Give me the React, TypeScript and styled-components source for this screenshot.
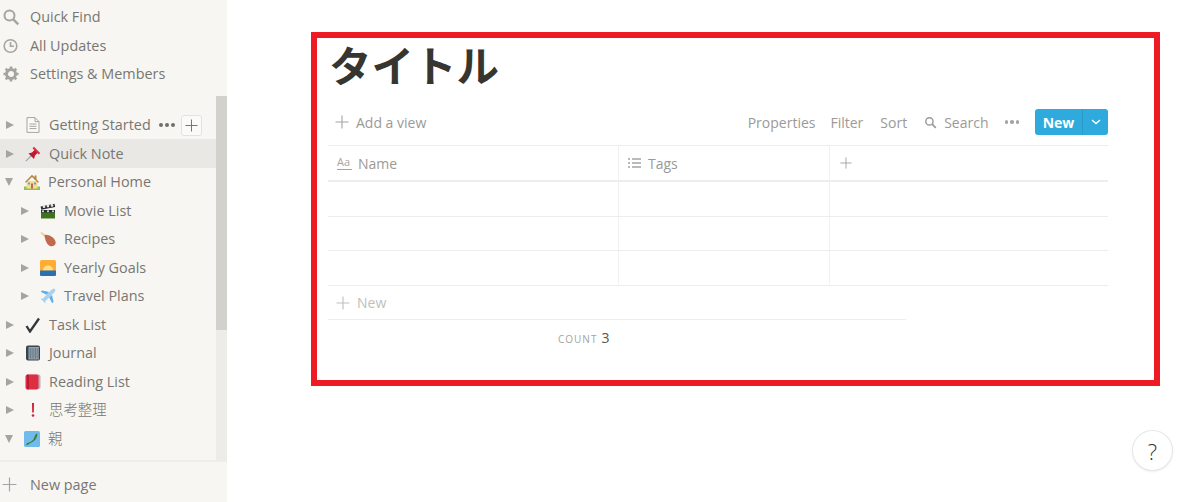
import React from "react";
import styled, { createGlobalStyle } from "styled-components";

const GlobalStyle = createGlobalStyle`
  html, body {
    margin: 0;
    padding: 0;
    height: 502px;
    overflow: hidden;
    background: #fff;
    font-family: "Open Sans", "Noto Sans CJK JP", sans-serif;
  }
  * { box-sizing: border-box; }
`;

const Page = styled.div`
  position: relative;
  display: flex;
  width: 1200px;
  height: 502px;
`;

const Sidebar = styled.aside`
  display: flex;
  flex-direction: column;
  width: 227px;
  height: 502px;
  background: #f7f6f3;
  color: #787672;
  font-size: 14.4px;
`;

const TopNav = styled.nav`
  height: 96px;
  padding-top: 2.5px;
`;

const NavRow = styled.div`
  display: flex;
  align-items: center;
  gap: 10px;
  height: 28.5px;
  padding-left: 2px;
`;

const NavIcon = styled.svg`
  flex: none;
  width: 18px;
  height: 18px;
  margin-top: 1px;
`;

const ScrollArea = styled.div`
  display: flex;
  flex: 1;
  min-height: 0;
`;

const PageList = styled.div`
  flex: 1;
  padding-top: 14.75px;
`;

const Scrollbar = styled.div`
  width: 11px;
  background: #edece9;
`;

const ScrollThumb = styled.div`
  height: 234px;
  background: #d3d1cb;
`;

const PageRow = styled.div<{ $depth?: number; $active?: boolean }>`
  display: flex;
  align-items: center;
  height: 28.5px;
  padding-left: ${(p) => 5 + (p.$depth ?? 0) * 15}px;
  background: ${(p) => (p.$active ? "#e9e8e5" : "transparent")};
`;

const Caret = styled.span<{ $open?: boolean }>`
  flex: none;
  width: 0;
  height: 0;
  ${(p) =>
    p.$open
      ? `margin-right: 11px;
         border-left: 4.5px solid transparent;
         border-right: 4.5px solid transparent;
         border-top: 8px solid #a5a4a0;`
      : `margin-left: 1px;
         margin-right: 11px;
         border-top: 4.5px solid transparent;
         border-bottom: 4.5px solid transparent;
         border-left: 8px solid #a5a4a0;`}
`;

const PageIcon = styled.svg`
  flex: none;
  width: 16px;
  height: 16px;
  margin-right: 8px;
`;

const PageLabel = styled.span<{ $cjk?: boolean }>`
  padding-bottom: ${(p) => (p.$cjk ? 3 : 0.5)}px;
  white-space: nowrap;
  font-family: ${(p) =>
    p.$cjk ? '"Noto Sans CJK JP", sans-serif' : '"Open Sans", sans-serif'};
  font-weight: ${(p) => (p.$cjk ? 300 : 400)};
`;

const RowDots = styled.span<{ $offset?: number }>`
  display: flex;
  gap: 2px;
  margin-left: ${(p) => p.$offset ?? 8}px;
`;

const Dot = styled.i<{ $color?: string; $size?: number }>`
  display: block;
  width: ${(p) => p.$size ?? 4}px;
  height: ${(p) => p.$size ?? 4}px;
  border-radius: 50%;
  background: ${(p) => p.$color ?? "#6f6e69"};
`;

const RowAdd = styled.span`
  display: flex;
  align-items: center;
  justify-content: center;
  width: 21px;
  height: 21px;
  margin-left: 6px;
  border: 1px solid #e3e2df;
  border-radius: 3px;
  background: #fbfaf8;
`;

const SidebarFooter = styled.div`
  display: flex;
  align-items: center;
  gap: 13px;
  height: 42px;
  padding: 5px 0 0 2px;
  border-top: 2px solid #eeede9;
`;

const Main = styled.main`
  flex: 1;
  padding: 32px 0 0 84px;
`;

const Frame = styled.section`
  width: 849px;
  height: 354px;
  padding: 0 46px 0 11px;
  border: 6px solid #ed1c24;
`;

const Title = styled.h1`
  height: 71px;
  margin: 0;
  padding-left: 1px;
  color: #37352f;
  font-family: "Noto Sans CJK JP", sans-serif;
  font-size: 42.5px;
  font-weight: 700;
  line-height: 52px;
`;

const Toolbar = styled.div`
  display: flex;
  align-items: center;
  height: 36px;
  padding: 0 0 10px 7px;
  color: #9b9a97;
  font-size: 14px;
`;

const AddView = styled.span`
  display: flex;
  align-items: center;
  gap: 7px;
  margin-right: auto;
`;

const ToolItem = styled.span<{ $gap?: number }>`
  display: flex;
  align-items: center;
  gap: 7px;
  margin-right: ${(p) => p.$gap ?? 17}px;
  white-space: nowrap;
`;

const NewButton = styled.div`
  display: flex;
  width: 73px;
  height: 26px;
  border-radius: 3px;
  background: #2eaadc;
  color: #fff;
  font-size: 14px;
  font-weight: 700;
`;

const NewLabel = styled.span`
  display: flex;
  flex: 1;
  align-items: center;
  justify-content: center;
  border-right: 1px solid #2a9ac7;
`;

const NewArrow = styled.span`
  display: flex;
  width: 25px;
  align-items: center;
  justify-content: center;
`;

const Table = styled.div`
  border-top: 1px solid #ededec;
`;

const TableRow = styled.div<{ $height: number; $thick?: boolean }>`
  display: grid;
  grid-template-columns: 291px 211px 1fr;
  height: ${(p) => p.$height}px;
  border-bottom: ${(p) => (p.$thick ? 2 : 1)}px solid #ededec;
`;

const Cell = styled.div<{ $gap?: number; $inset?: number }>`
  display: flex;
  align-items: center;
  gap: ${(p) => p.$gap ?? 6}px;
  padding-left: ${(p) => p.$inset ?? 9}px;
  border-right: 1px solid #f1f1f0;
  color: #9b9a97;
  font-size: 14px;

  &:last-child {
    border-right: 0;
  }
`;

const TextTypeIcon = styled.span`
  display: block;
  width: 15px;
  height: 14px;
  border-bottom: 1px solid #a5a4a0;
  color: #a5a4a0;
  font-size: 11px;
  line-height: 12px;
`;

const NewRow = styled.div`
  display: flex;
  align-items: center;
  gap: 7px;
  width: 578px;
  height: 34px;
  padding-left: 8px;
  border-bottom: 1px solid #ededec;
  color: #c0bfbc;
  font-size: 14px;
`;

const CountRow = styled.div`
  display: flex;
  align-items: baseline;
  gap: 4px;
  width: 578px;
  padding: 8px 0 0 230px;
  color: #a5a4a0;
  font-size: 10px;
  letter-spacing: 1px;
`;

const CountValue = styled.span`
  color: #55534e;
  font-size: 14px;
  letter-spacing: 0;
`;

const HelpButton = styled.div`
  position: absolute;
  left: 1133px;
  top: 431px;
  display: flex;
  align-items: center;
  justify-content: center;
  width: 39px;
  height: 39px;
  border-radius: 50%;
  background: #fff;
  box-shadow: 0 0 0 1px #e6e6e5, 0 1px 3px rgba(15, 15, 15, 0.14);
  color: #37352f;
  font-size: 22px;
  font-weight: 300;
`;

function PlusIcon({ size, color }: { size: number; color: string }) {
  return (
    <svg width={size} height={size} viewBox="0 0 14 14" style={{ flex: "none" }}>
      <path d="M7 .5v13M.5 7h13" stroke={color} strokeWidth="1.1" fill="none" />
    </svg>
  );
}

function SearchGlyph({ color, size }: { color: string; size: number }) {
  return (
    <svg width={size} height={size} viewBox="0 0 18 18" style={{ flex: "none" }}>
      <circle cx="7.5" cy="7.5" r="5" fill="none" stroke={color} strokeWidth="2" />
      <path d="M11.3 11.3l5 5" stroke={color} strokeWidth="2.4" />
    </svg>
  );
}

const pageIcons: Record<string, React.ReactNode> = {
  doc: (
    <>
      <path d="M2 .6h8l4 4v10.800H2z" fill="#fbfaf8" stroke="#a5a4a0" />
      <path d="M10 .6v4h4M4.500 7h7M4.500 9.300h7M4.500 11.600h7" fill="none" stroke="#a5a4a0" />
    </>
  ),
  pin: (
    <>
      <path d="M.8 15.200L6 10" stroke="#99aab5" strokeWidth="1.200" />
      <path d="M3.500 7.500l3.500-1 3-3 3 3-3 3-1 3.500z" fill="#be1931" />
      <path d="M9 .8l6.200 6.200-1.500 1.500L7.500 2.300z" fill="#dd2e44" />
    </>
  ),
  home: (
    <>
      <path d="M0 12.500h16V16H0z" fill="#8fc05c" />
      <path d="M2.500 7h11v7.500h-11z" fill="#f6dd8f" />
      <path d="M8 .8L1 8l1 .8L8 3l6 5.800 1-.8z" fill="#b4853d" />
      <path d="M10.500 1.500h2v4h-2z" fill="#b4853d" />
      <path d="M4 8.500h2v2H4zM10 8.500h2v2h-2z" fill="#5aa0d8" />
      <path d="M7 9.500h2v5H7z" fill="#c1694f" />
    </>
  ),
  movie: (
    <>
      <path d="M1 9h14v6.500H1z" fill="#3e721d" />
      <path d="M1 7h14v2.500H1z" fill="#292f33" />
      <path d="M.6 3.500L14.500.8l.7 3.200L1.300 6.800z" fill="#292f33" />
      <circle cx="4" cy="3.800" r="1.300" fill="#e8e8e8" />
      <circle cx="8" cy="3.100" r="1.300" fill="#e8e8e8" />
      <circle cx="12" cy="2.400" r="1.300" fill="#e8e8e8" />
      <circle cx="3" cy="8.300" r="1" fill="#e8e8e8" />
      <circle cx="8" cy="8.300" r="1" fill="#e8e8e8" />
      <circle cx="13" cy="8.300" r="1" fill="#e8e8e8" />
    </>
  ),
  chicken: (
    <>
      <path d="M1 1.500l5 4.500" stroke="#f4cf9c" strokeWidth="2" />
      <path d="M4.500 4c3.500-1 9.500 2 11 6.500 1 3.500-2.500 5.500-5.500 4.500-3-1-5-6-5.500-11z" fill="#c1694f" />
    </>
  ),
  sunrise: (
    <>
      <rect width="16" height="16" rx="1.500" fill="#ffac33" />
      <path d="M3 10.500a5 5 0 0 1 10 0z" fill="#ffe08a" />
      <path d="M0 10.500h16V14.500a1.500 1.500 0 0 1-1.500 1.500h-13A1.500 1.500 0 0 1 0 14.500z" fill="#2a6fb0" />
    </>
  ),
  plane: (
    <>
      <path d="M15 1c-1-.8-2.800 0-3.800 1L3 10.500l-2.500.3L3 13l2.300 2.500.2-2.500L14 4.800c1-1 1.800-2.800 1-3.800z" fill="#a6d3f0" />
      <path d="M9 4L2 2.500.8 3.800l5.700 3zM12 7l1.500 7-1.300 1.300-3-5.800z" fill="#5dadec" />
    </>
  ),
  check: <path d="M1.500 9l3.500 5.500L14 1.500" fill="none" stroke="#31373d" strokeWidth="2.300" />,
  journal: (
    <>
      <rect x="1" y=".5" width="14" height="15" rx="2" fill="#39434c" />
      <rect x="3.500" y="2" width="10.500" height="12.500" fill="#97a6b3" />
      <path d="M4 4h10M4 6h10M4 8h10M4 10h10M4 12h10M5.500 3v11M8 3v11M10.500 3v11M13 3v11" stroke="#67757f" strokeWidth=".7" />
    </>
  ),
  book: (
    <>
      <rect x="3" y=".5" width="12.500" height="14.500" rx="2" fill="#c3aeb2" />
      <rect x=".5" y=".5" width="13" height="15" rx="2" fill="#dd2e44" />
      <path d="M2.500.5h1v15h-1z" fill="#a0041e" />
    </>
  ),
  bang: (
    <>
      <path d="M7 1h2l-.2 9.500H7.200z" fill="#cf1f36" />
      <circle cx="8" cy="13.500" r="1.300" fill="#cf1f36" />
    </>
  ),
  japan: (
    <>
      <rect width="16" height="16" rx="1.500" fill="#6fbcec" />
      <path d="M2 13.500c1-1.500 2.500-1.500 4-2.500 1.500-.5 3-1.500 4-3.500.5-1.500 1-3.500 2.500-5l1 .5c-.5 2-1 4-2 5.500-2 2.500-5 3-6.500 4.500-1 1-2 1.500-3 .5z" fill="#3f7a30" />
    </>
  ),
};

type PageItem = {
  icon: string;
  label: string;
  depth?: number;
  open?: boolean;
  active?: boolean;
  cjk?: boolean;
};

const pages: PageItem[] = [
  { icon: "doc", label: "Getting Started" },
  { icon: "pin", label: "Quick Note", active: true },
  { icon: "home", label: "Personal Home", open: true },
  { icon: "movie", label: "Movie List", depth: 1 },
  { icon: "chicken", label: "Recipes", depth: 1 },
  { icon: "sunrise", label: "Yearly Goals", depth: 1 },
  { icon: "plane", label: "Travel Plans", depth: 1 },
  { icon: "check", label: "Task List" },
  { icon: "journal", label: "Journal" },
  { icon: "book", label: "Reading List" },
  { icon: "bang", label: "思考整理", cjk: true },
  { icon: "japan", label: "親", open: true, cjk: true },
];

export default function App() {
  return (
    <Page>
      <GlobalStyle />
      <Sidebar>
        <TopNav>
          <NavRow>
            <NavIcon viewBox="0 0 18 18">
              <circle cx="7.500" cy="7.500" r="5" fill="none" stroke="#a5a4a0" strokeWidth="2" />
              <path d="M11.300 11.300l5 5" stroke="#a5a4a0" strokeWidth="2.400" />
            </NavIcon>
            Quick Find
          </NavRow>
          <NavRow>
            <NavIcon viewBox="0 0 18 18">
              <circle cx="8.500" cy="9" r="6.300" fill="none" stroke="#a5a4a0" strokeWidth="1.600" />
              <path d="M8.500 5v4.300h3.500" fill="none" stroke="#a5a4a0" strokeWidth="1.600" />
            </NavIcon>
            All Updates
          </NavRow>
          <NavRow>
            <NavIcon viewBox="0 0 18 18">
              <circle cx="9" cy="9" r="4.500" fill="none" stroke="#a5a4a0" strokeWidth="3" />
              <path
                d="M9 1.500v3M9 13.500v3M1.500 9h3M13.500 9h3M3.700 3.700l2.100 2.100M12.200 12.200l2.100 2.100M3.700 14.300l2.100-2.100M12.200 5.800l2.100-2.100"
                stroke="#a5a4a0"
                strokeWidth="2.600"
              />
            </NavIcon>
            Settings &amp; Members
          </NavRow>
        </TopNav>
        <ScrollArea>
          <PageList>
            {pages.map((page, i) => (
              <PageRow key={page.label} $depth={page.depth} $active={page.active}>
                <Caret $open={page.open} />
                <PageIcon viewBox="0 0 16 16">{pageIcons[page.icon]}</PageIcon>
                <PageLabel $cjk={page.cjk}>{page.label}</PageLabel>
                {i === 0 && (
                  <>
                    <RowDots>
                      <Dot />
                      <Dot />
                      <Dot />
                    </RowDots>
                    <RowAdd>
                      <PlusIcon size={13} color="#787672" />
                    </RowAdd>
                  </>
                )}
              </PageRow>
            ))}
          </PageList>
          <Scrollbar>
            <ScrollThumb />
          </Scrollbar>
        </ScrollArea>
        <SidebarFooter>
          <PlusIcon size={15} color="#a5a4a0" />
          New page
        </SidebarFooter>
      </Sidebar>
      <Main>
        <Frame>
          <Title>タイトル</Title>
          <Toolbar>
            <AddView>
              <PlusIcon size={14} color="#a5a4a0" />
              Add a view
            </AddView>
            <ToolItem $gap={15}>Properties</ToolItem>
            <ToolItem>Filter</ToolItem>
            <ToolItem>Sort</ToolItem>
            <ToolItem $gap={16}>
              <SearchGlyph color="#9b9a97" size={13} />
              Search
            </ToolItem>
            <ToolItem $gap={16}>
              <RowDots $offset={0}>
                <Dot $color="#a5a4a0" $size={3.5} />
                <Dot $color="#a5a4a0" $size={3.5} />
                <Dot $color="#a5a4a0" $size={3.5} />
              </RowDots>
            </ToolItem>
            <NewButton>
              <NewLabel>New</NewLabel>
              <NewArrow>
                <svg width="10" height="6" viewBox="0 0 10 6">
                  <path d="M1 1l4 3.500L9 1" fill="none" stroke="#fff" strokeWidth="1.400" />
                </svg>
              </NewArrow>
            </NewButton>
          </Toolbar>
          <Table>
            <TableRow $height={36} $thick>
              <Cell>
                <TextTypeIcon>Aa</TextTypeIcon>
                Name
              </Cell>
              <Cell>
                <svg width="14" height="12" viewBox="0 0 14 12" style={{ flex: "none" }}>
                  <path d="M0 2h2M0 6h2M0 10h2M4 2h9M4 6h9M4 10h9" stroke="#a5a4a0" strokeWidth="1.500" />
                </svg>
                Tags
              </Cell>
              <Cell $inset={10}>
                <PlusIcon size={12} color="#a5a4a0" />
              </Cell>
            </TableRow>
            <TableRow $height={35}>
              <Cell />
              <Cell />
              <Cell />
            </TableRow>
            <TableRow $height={34}>
              <Cell />
              <Cell />
              <Cell />
            </TableRow>
            <TableRow $height={35}>
              <Cell />
              <Cell />
              <Cell />
            </TableRow>
          </Table>
          <NewRow>
            <PlusIcon size={14} color="#c0bfbc" />
            New
          </NewRow>
          <CountRow>
            COUNT
            <CountValue>3</CountValue>
          </CountRow>
        </Frame>
      </Main>
      <HelpButton>?</HelpButton>
    </Page>
  );
}
